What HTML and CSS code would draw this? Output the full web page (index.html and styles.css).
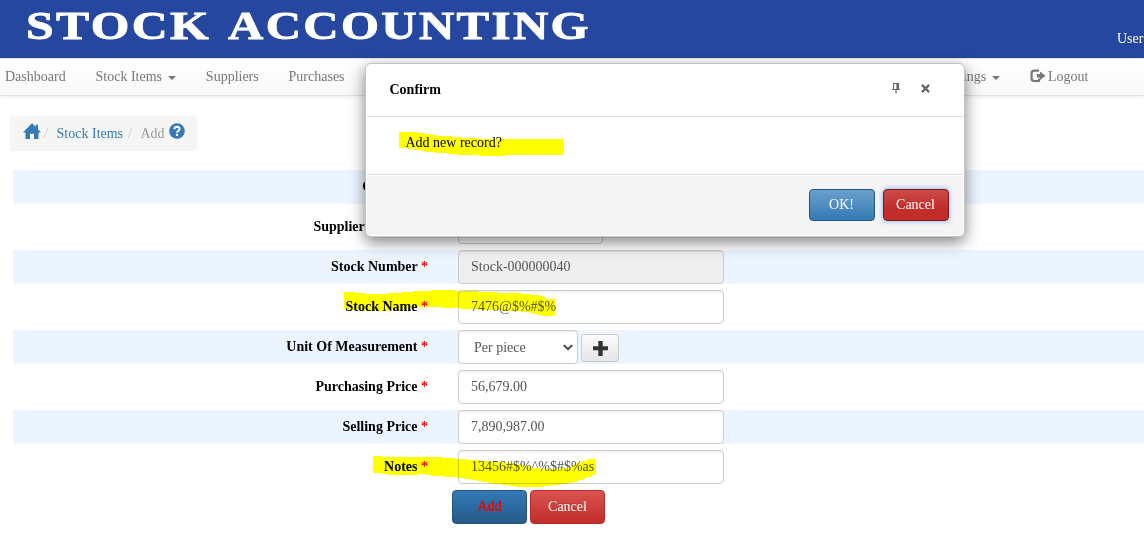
FILE: index.html
```html
<!DOCTYPE html>
<html lang="en">
<head>
<meta charset="utf-8">
<title>Stock Accounting</title>
<link rel="stylesheet" href="styles.css">
</head>
<body>
<header class="banner">
  <svg class="brand" width="620" height="58" role="img" aria-label="Stock Accounting">
    <text class="brand-text" x="26" y="39.3" textLength="185" lengthAdjust="spacingAndGlyphs">STOCK</text>
    <text class="brand-text" x="228" y="39.3" textLength="363" lengthAdjust="spacingAndGlyphs">ACCOUNTING</text>
  </svg>
  <span class="user">User</span>
</header>
<nav class="nav">
  <div class="nav-group">
    <a>Dashboard</a>
    <a>Stock Items<i class="caret"></i></a>
    <a>Suppliers</a>
    <a>Purchases</a>
  </div>
  <div class="nav-group nav-end">
    <a>Settings<i class="caret"></i></a>
    <a><svg class="logout" width="16" height="14" viewBox="0 0 16 14"><path fill="none" stroke="currentColor" stroke-width="2.2" d="M9 1.6H4.4Q1.6 1.6 1.6 4V9.6Q1.6 12 4.4 12H9V9.6"/><path fill="currentColor" d="M10 2.4L15.5 6.7 10 11V8.5H6.8V4.9H10Z"/></svg>Logout</a>
  </div>
</nav>
<main class="content">
  <div class="crumbs">
    <svg class="home" width="18" height="17" viewBox="0 0 18 17"><path fill="currentColor" d="M9 .3L12.7 4V1.8H15V6.2L18 9.5H15.5V16H11V10.8H7V16H2.5V9.5H0Z"/></svg>
    <span class="slash s1">/</span><a class="link">Stock Items</a><span class="slash s2">/</span><span class="current">Add</span>
    <svg class="help" width="16" height="16" viewBox="0 0 16 16"><circle cx="8" cy="8" r="7.8" fill="currentColor"/><path fill="none" stroke="#fff" stroke-width="2" d="M5.4 6.3C5.4 3.1 10.6 3.1 10.6 5.9C10.6 7.8 8 7.7 8 9.8"/><path fill="#fff" d="M6.9 10.8H9.1V13H6.9Z"/></svg>
  </div>
  <div class="form">
    <div class="row"><label>Category <b>*</b></label><div class="field"><div class="input short"></div></div></div>
    <div class="row"><label>Supplier Number <b>*</b></label><div class="field"><div class="input short"></div></div></div>
    <div class="row"><label>Stock Number <b>*</b></label><div class="field"><div class="input readonly">Stock-000000040</div></div></div>
    <div class="row"><label>Stock Name <b>*</b></label><div class="field"><div class="input">7476@$%#$%</div></div></div>
    <div class="row"><label>Unit Of Measurement <b>*</b></label><div class="field">
      <div class="input select">Per piece<svg width="10" height="7" viewBox="0 0 10 7"><path fill="none" stroke="#444" stroke-width="2" d="M.8 1.1L5 5.2 9.2 1.1"/></svg></div>
      <div class="plus"><svg width="15" height="15" viewBox="0 0 15 15"><path fill="#333" d="M5.3 0H9.7V5.3H15V9.3H9.7V15H5.3V9.3H0V5.3H5.3Z"/></svg></div>
    </div></div>
    <div class="row"><label>Purchasing Price <b>*</b></label><div class="field"><div class="input">56,679.00</div></div></div>
    <div class="row"><label>Selling Price <b>*</b></label><div class="field"><div class="input">7,890,987.00</div></div></div>
    <div class="row"><label>Notes <b>*</b></label><div class="field"><div class="input">13456#$%^%$#$%as</div></div></div>
  </div>
  <div class="actions"><div class="btn add">Add</div><div class="btn cancel">Cancel</div></div>
</main>
<section class="dialog">
  <div class="dialog-head"><strong>Confirm</strong>
    <svg class="pin" width="8" height="11" viewBox="0 0 8 11"><path fill="#666" d="M1 0H7V6H8V7H4.6V10.5H3.4V7H0V6H1ZM2.1 1V6H4.4V1Z" fill-rule="evenodd"/></svg>
    <svg class="close" width="9" height="9" viewBox="0 0 9 9"><path stroke="#666" stroke-width="2.3" d="M.9 .9L8.1 8.1M8.1 .9L.9 8.1"/></svg>
  </div>
  <div class="dialog-body">Add new record?</div>
  <div class="dialog-foot"><div class="btn ok">OK!</div><div class="btn confirm-cancel">Cancel</div></div>
</section>
<svg class="marker" width="1144" height="553" viewBox="0 0 1144 553" shape-rendering="crispEdges">
  <path d="M399 132H418V133H426V134H432V135H437V136H451V137H461V138H477V139H564V155H506V156H479V155H458V154H447V153H435V152H426V151H421V150H415V149H408V148H399Z"/>
  <path d="M344 292H355V293H366V294H388V293H402V292H413V291H431V290H456V291H478V292H497V293H512V293H522V294H532V295H540V296H543V297H546V299H555V315H553V316H542V315H537V314H533V313H529V312H521V311H502V310H478V309H460V308H443V307H417V308H407V309H400V310H390V311H363V310H350V309H344Z"/>
  <path d="M373 456H382V457H415V457H443V458H453V459H468V460H480V461H492V462H506V463H513V464H522V466H531V468H540V469H562V468H571V465H576V463H581V461H588V459H596V475H592V477H587V478H584V480H578V482H573V483H568V484H560V485H551V486H544V487H516V486H509V485H502V484H494V483H488V482H482V481H477V480H471V479H464V478H458V477H444V476H431V475H426V474H417V475H388V474H382V473H373Z"/>
</svg>
</body>
</html>
```
FILE: styles.css
```css
* { box-sizing: border-box; }
body { margin: 0; width: 1144px; height: 553px; overflow: hidden; position: relative; background: #fff; font: 14px/20px "Liberation Serif", "Times New Roman", serif; color: #000; }
svg { flex: none; }
.banner { height: 58px; background: #2547a0; display: flex; justify-content: space-between; overflow: hidden; }
.brand-text { font: bold 41px "Liberation Serif", serif; letter-spacing: 2px; fill: #fff; stroke: #fff; stroke-width: .9px; }
.user { color: #fff; width: 27px; padding-top: 29px; white-space: nowrap; }
.nav { height: 38px; border-top: 1px solid #e7e7e7; border-bottom: 1px solid #e1e1e1; background: linear-gradient(#fff, #f8f8f8); box-shadow: 0 1px 5px rgba(0,0,0,.075); display: flex; justify-content: space-between; padding: 8px 55.5px 0 5px; color: #777; }
.nav-group { display: flex; gap: 29.85px; }
.nav-group a { display: flex; align-items: center; height: 20px; white-space: nowrap; }
.caret { border: 4px solid transparent; border-top-color: #777; border-bottom: 0; margin: 2px 0 0 6px; }
.logout { margin: -3px 2px 0 0; }
.content { padding: 20px 0 0 13px; }
.crumbs { width: 187px; height: 35px; margin-left: -3px; background: #f5f5f5; border-radius: 4px; display: flex; align-items: center; padding-left: 13px; color: #999; }
.home, .help, .link { color: #337ab7; }
.home { margin-top: -5px; }
.help { margin: -5px 0 0 4px; }
.slash { color: #ccc; }
.s1 { margin: 0 8.7px 0 3px; }
.s2 { margin: 0 8.5px 0 5px; }
.form { display: flex; flex-direction: column; gap: 6px; padding-top: 19px; }
.row { height: 34px; display: grid; grid-template-columns: 445px 1fr; }
.row:nth-child(odd) { background: #ecf5ff; }
.row label { padding: 7px 30px 0 0; text-align: right; font-weight: bold; white-space: nowrap; line-height: 19px; }
.row b { color: #f00; font-weight: normal; text-shadow: 0 0 .5px #f00; }
.field { display: flex; align-items: flex-start; gap: 3px; }
.input { width: 266px; height: 34px; border: 1px solid #ccc; border-radius: 4px; background: #fff; color: #555; padding: 6px 12px; line-height: 20px; box-shadow: inset 0 1px 1px rgba(0,0,0,.075); }
.input.readonly { background: #eee; }
.input.short { width: 145px; }
.input.select { width: 120px; padding: 1px 4px 0 15px; display: flex; align-items: center; justify-content: space-between; }
.plus { width: 38px; height: 28px; margin-top: 4px; border: 1px solid #ccc; border-radius: 3px; background: linear-gradient(#fcfcfc, #e5e5e5); display: flex; align-items: center; justify-content: center; }
.actions { display: flex; gap: 3px; padding: 6px 0 0 439px; }
.btn { display: flex; justify-content: center; border-radius: 4px; color: #fff; padding-top: 6px; height: 34px; width: 75px; border: 1px solid; }
.add { color: #f00; background: linear-gradient(#337ab7, #265a88); border-color: #245580; text-shadow: 0 0 .5px #f00, 0 -1px 0 rgba(0,0,0,.2); }
.cancel { background: linear-gradient(#d9534f, #c12e2a); border-color: #b92c28; text-shadow: 0 -1px 0 rgba(0,0,0,.2); }
.dialog { position: absolute; left: 365px; top: 63px; width: 600px; height: 174px; border: 1px solid #c4c4c4; border-radius: 6px; background: #fff; box-shadow: 0 5px 15px rgba(0,0,0,.5); display: flex; flex-direction: column; overflow: hidden; }
.dialog-head { height: 53px; border-bottom: 1px solid #e1e1e1; display: flex; align-items: center; padding: 0 34px 0 23.5px; }
.pin { margin: -3px 0 0 auto; }
.close { margin: -4px 0 0 21px; }
.dialog-body { height: 57px; padding: 16px 0 0 39.5px; }
.dialog-foot { flex: 1; margin: 0 1px 1px; border-top: 1px solid #ddd; box-shadow: inset 0 1px #fff; background: #f4f4f4; display: flex; justify-content: flex-end; gap: 8px; padding: 14px 14px 0 0; }
.dialog-foot .btn { width: 66px; height: 32px; padding: 5px 1px 0 0; }
.ok { background: linear-gradient(#6b9fcb, #337ab7); border-color: #245580; }
.confirm-cancel { background: linear-gradient(#cc4b49, #c12e2a 60%); border-color: #761c19; box-shadow: 0 0 5px #76a7f5; }
.marker { position: absolute; left: 0; top: 0; fill: #ff0; mix-blend-mode: multiply; pointer-events: none; }
```
